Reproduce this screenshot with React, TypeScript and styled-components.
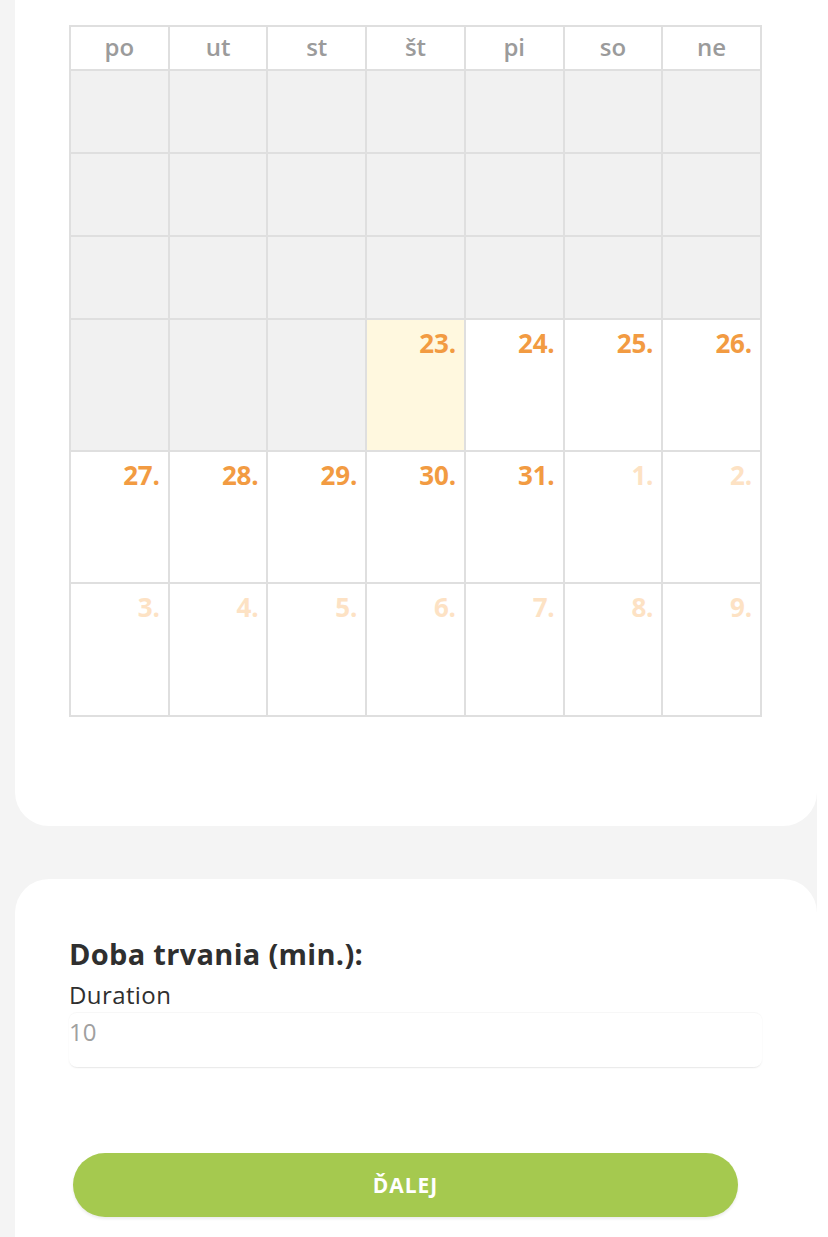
import React from "react";
import styled, { createGlobalStyle } from "styled-components";

const Global = createGlobalStyle`
  html, body { margin: 0; padding: 0; background: #ffffff; }
  body { font-family: "Open Sans", Lato, Arial, sans-serif; }
  * { box-sizing: border-box; }
`;

const Page = styled.div`
  width: 817px;
  min-height: 1237px;
  background: #f4f4f4;
  padding-left: 15px;
  overflow: hidden;
`;

const Card = styled.section<{ $top?: boolean }>`
  background: #ffffff;
  border-radius: ${(p) => (p.$top ? "0 0 34px 34px" : "34px 34px 0 0")};
  margin-top: ${(p) => (p.$top ? "0" : "53px")};
`;

const CalendarCard = styled(Card)`
  padding: 25px 55px 109px 54px;
`;

const Grid = styled.div`
  display: grid;
  grid-template-columns: repeat(7, 1fr);
  grid-template-rows: 42px 81px 81px 81px 130px 130px 131px;
  gap: 2px;
  padding: 2px;
  background: #dfdfdf;
`;

const HeadCell = styled.div`
  background: #ffffff;
  display: flex;
  align-items: center;
  justify-content: center;
  color: #9b9b9b;
  font-size: 24px;
  font-weight: 600;
  padding-bottom: 3px;
`;

type Kind = "past" | "today" | "day" | "next";

const DayCell = styled.div<{ $kind: Kind }>`
  background: ${(p) =>
    p.$kind === "past" ? "#f1f1f1" : p.$kind === "today" ? "#fff8df" : "#ffffff"};
  display: flex;
  justify-content: flex-end;
  align-items: flex-start;
  padding: 5px 8px 0 0;
  font-size: 26px;
  font-weight: 700;
  letter-spacing: -0.2px;
  color: ${(p) => (p.$kind === "next" ? "#fde2c4" : "#f29b42")};
`;

const FormCard = styled(Card)`
  padding: 56px 55px 20px 54px;
  min-height: 358px;
`;

const Title = styled.h2`
  margin: 0;
  font-size: 29px;
  font-weight: 700;
  color: #2f2f2f;
  line-height: 38px;
  letter-spacing: 0.3px;
`;

const Label = styled.div`
  margin-top: 7px;
  font-size: 24px;
  color: #2f2f2f;
  line-height: 30px;
  letter-spacing: 0.4px;
`;

const InputBox = styled.div`
  margin-top: 2px;
  height: 55px;
  border-radius: 8px;
  box-shadow: 0 1px 2px rgba(0, 0, 0, 0.06), 0 2px 1px -1px rgba(0, 0, 0, 0.04);
  border-top: 1px solid #f7f7f7;
  padding: 3px 0 0 0;
  font-size: 24px;
  color: #a0a0a0;
  line-height: 32px;
`;

const NextButton = styled.button`
  display: block;
  margin: 86px 0 0 4px;
  width: 665px;
  height: 64px;
  border: none;
  border-radius: 32px;
  background: #a5c94f;
  color: #ffffff;
  font-family: "Open Sans", Lato, Arial, sans-serif;
  font-size: 21px;
  font-weight: 700;
  letter-spacing: 1px;
  box-shadow: 0 2px 3px rgba(0, 0, 0, 0.08);
`;

const heads = ["po", "ut", "st", "št", "pi", "so", "ne"];

type Day = { label: string; kind: Kind };

const days: Day[] = [
  ...Array.from({ length: 24 }, () => ({ label: "", kind: "past" as Kind })),
  { label: "23.", kind: "today" },
  { label: "24.", kind: "day" },
  { label: "25.", kind: "day" },
  { label: "26.", kind: "day" },
  { label: "27.", kind: "day" },
  { label: "28.", kind: "day" },
  { label: "29.", kind: "day" },
  { label: "30.", kind: "day" },
  { label: "31.", kind: "day" },
  { label: "1.", kind: "next" },
  { label: "2.", kind: "next" },
  ...[3, 4, 5, 6, 7, 8, 9].map((n) => ({ label: `${n}.`, kind: "next" as Kind })),
];

export default function App() {
  return (
    <>
      <Global />
      <Page>
        <CalendarCard $top>
          <Grid>
            {heads.map((h) => (
              <HeadCell key={h}>{h}</HeadCell>
            ))}
            {days.map((d, i) => (
              <DayCell key={i} $kind={d.kind}>
                {d.label}
              </DayCell>
            ))}
          </Grid>
        </CalendarCard>
        <FormCard>
          <Title>Doba trvania (min.):</Title>
          <Label>Duration</Label>
          <InputBox>10</InputBox>
          <NextButton>ĎALEJ</NextButton>
        </FormCard>
      </Page>
    </>
  );
}
